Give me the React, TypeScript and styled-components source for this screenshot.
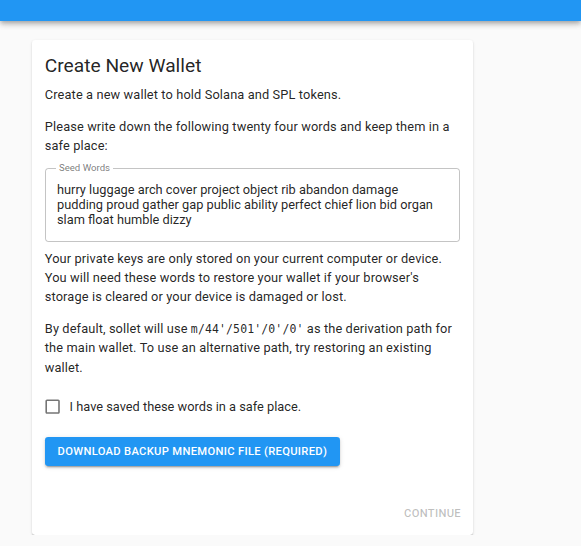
import React from "react";
import styled, { createGlobalStyle } from "styled-components";

const Global = createGlobalStyle`
  html, body { margin: 0; padding: 0; background: #fafafa; }
  body { font-family: Roboto, "Liberation Sans", sans-serif; color: rgba(0,0,0,0.87); }
  * { box-sizing: border-box; }
`;

const AppBar = styled.header`
  height: 21px;
  background: #2196f3;
  box-shadow: 0px 2px 4px -1px rgba(0,0,0,0.2), 0px 4px 5px 0px rgba(0,0,0,0.14), 0px 1px 10px 0px rgba(0,0,0,0.12);
  position: relative;
  z-index: 1;
`;

const Page = styled.main`
  padding: 19px 0 0 32px;
`;

const Card = styled.section`
  width: 441px;
  background: #fff;
  border-radius: 3.2px;
  box-shadow: 0px 2px 1px -1px rgba(0,0,0,0.2), 0px 1px 1px 0px rgba(0,0,0,0.14), 0px 1px 3px 0px rgba(0,0,0,0.12);
  display: flex;
  flex-direction: column;
`;

const CardContent = styled.div`
  padding: 12.8px 12.8px 19.2px;
  display: flex;
  flex-direction: column;
`;

const Title = styled.h2`
  margin: 0 0 6.72px;
  font-size: 19.2px;
  font-weight: 400;
  line-height: 1.334;
`;

const Para = styled.p`
  margin: 0 0 12.8px;
  font-size: 12.8px;
  line-height: 1.5;
  letter-spacing: 0.00938em;
`;

const Code = styled.code`
  font-family: "DejaVu Sans Mono", "Liberation Mono", monospace;
  font-size: 11.5px;
`;

const Field = styled.fieldset`
  margin: -5px 0 6.4px;
  padding: 8.6px 17px 14px 11.2px;
  border: 1px solid rgba(0,0,0,0.23);
  border-radius: 3.2px;
  min-width: 0;
`;

const Legend = styled.legend`
  margin-left: -1px;
  padding: 0 3px;
  font-size: 9.6px;
  line-height: 10px;
  color: rgba(0,0,0,0.54);
`;

const SeedText = styled.div`
  font-size: 12.8px;
  line-height: 15.2px;
  color: rgba(0,0,0,0.87);
`;

const CheckRow = styled.label`
  display: flex;
  align-items: center;
  margin-left: -8.8px;
  font-size: 12.8px;
  line-height: 1.5;
  cursor: pointer;
`;

const CheckBoxWrap = styled.span`
  display: inline-flex;
  padding: 7.2px;
`;

const ButtonRow = styled.div`
  display: flex;
  margin-top: 14px;
`;

const ContainedButton = styled.button`
  font-family: Roboto, "Liberation Sans", sans-serif;
  font-size: 11.2px;
  font-weight: 500;
  letter-spacing: 0.02857em;
  line-height: 19.6px;
  text-transform: uppercase;
  padding: 4.8px 12.8px;
  border: 0;
  border-radius: 3.2px;
  background: #2196f3;
  color: #fff;
  box-shadow: 0px 3px 1px -2px rgba(0,0,0,0.2), 0px 2px 2px 0px rgba(0,0,0,0.14), 0px 1px 5px 0px rgba(0,0,0,0.12);
  cursor: pointer;
`;

const CardActions = styled.div`
  display: flex;
  justify-content: flex-end;
  padding: 14px 6.4px 6.4px;
`;

const TextButton = styled.button`
  font-family: Roboto, "Liberation Sans", sans-serif;
  font-size: 11.2px;
  font-weight: 500;
  letter-spacing: 0.02857em;
  line-height: 19.6px;
  text-transform: uppercase;
  padding: 4.8px 5.6px;
  border: 0;
  background: transparent;
  color: rgba(0,0,0,0.26);
`;

const CheckIcon = () => (
  <svg width="19.2" height="19.2" viewBox="0 0 24 24" fill="rgba(0,0,0,0.54)">
    <path d="M19 5v14H5V5h14m0-2H5c-1.1 0-2 .9-2 2v14c0 1.1.9 2 2 2h14c1.1 0 2-.9 2-2V5c0-1.1-.9-2-2-2z" />
  </svg>
);

export default function App() {
  return (
    <>
      <Global />
      <AppBar />
      <Page>
        <Card>
          <CardContent>
            <Title>Create New Wallet</Title>
            <Para>Create a new wallet to hold Solana and SPL tokens.</Para>
            <Para>
              Please write down the following twenty four words and keep them in a safe place:
            </Para>
            <Field>
              <Legend>Seed Words</Legend>
              <SeedText>
                hurry luggage arch cover project object rib abandon damage pudding proud gather gap
                public ability perfect chief lion bid organ slam float humble dizzy
              </SeedText>
            </Field>
            <Para>
              Your private keys are only stored on your current computer or device. You will need
              these words to restore your wallet if your browser's storage is cleared or your device
              is damaged or lost.
            </Para>
            <Para>
              By default, sollet will use <Code>m/44'/501'/0'/0'</Code> as the derivation path for
              the main wallet. To use an alternative path, try restoring an existing wallet.
            </Para>
            <CheckRow>
              <CheckBoxWrap>
                <CheckIcon />
              </CheckBoxWrap>
              I have saved these words in a safe place.
            </CheckRow>
            <ButtonRow>
              <ContainedButton>Download Backup Mnemonic File (Required)</ContainedButton>
            </ButtonRow>
          </CardContent>
          <CardActions>
            <TextButton disabled>Continue</TextButton>
          </CardActions>
        </Card>
      </Page>
    </>
  );
}
